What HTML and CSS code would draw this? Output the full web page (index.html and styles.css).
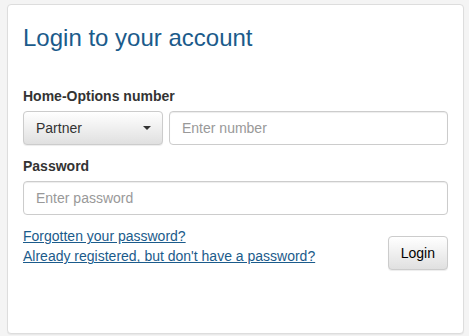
FILE: index.html
```html
<!DOCTYPE html>
<html lang="en">
<head>
    <meta charset="UTF-8">
    <meta name="viewport" content="width=device-width, initial-scale=1.0">
    <title>Login</title>
    <link rel="stylesheet" href="styles.css">
</head>
<body>
    <div class="login-panel">
        <h3 class="login-title">Login to your account</h3>

        <form class="login-form" onsubmit="return false;">
            <div class="form-group">
                <label for="number-input">Home-Options number</label>
                <div class="number-row">
                    <button type="button" class="btn btn-default select-btn">
                        <span>Partner</span>
                        <span class="caret"></span>
                    </button>
                    <input type="text" id="number-input" class="form-control" placeholder="Enter number">
                </div>
            </div>

            <div class="form-group">
                <label for="password-input">Password</label>
                <input type="password" id="password-input" class="form-control" placeholder="Enter password">
            </div>

            <div class="form-footer">
                <div class="links">
                    <a href="#">Forgotten your password?</a>
                    <a href="#">Already registered, but don't have a password?</a>
                </div>
                <button type="submit" class="btn btn-default login-btn">Login</button>
            </div>
        </form>
    </div>
</body>
</html>
```

FILE: styles.css
```css
html, body {
    height: 100%;
}
body {
    font-family: "Liberation Sans", Arial, sans-serif;
    font-size: 14px;
    line-height: 20px;
    color: #333;
    background-color: #f4f4f4;
    margin: 0;
    padding: 4px 5px 2px 7px;
    box-sizing: border-box;
}
.login-panel {
    height: 100%;
    box-sizing: border-box;
    background-color: #fff;
    border: 1px solid #ddd;
    border-radius: 4px;
    box-shadow: 0 1px 1px rgba(0,0,0,0.05);
    padding: 15px;
}
.login-title {
    font-size: 24px;
    font-weight: normal;
    line-height: 1.1;
    color: #1b5b8b;
    margin: 5px 0 0 0;
}
.login-form {
    margin-top: 35px;
}
.form-group {
    margin-bottom: 11px;
}
.form-group label {
    display: block;
    font-weight: bold;
    margin-bottom: 5px;
}
.number-row {
    display: flex;
    gap: 6px;
}
.form-control {
    display: block;
    width: 100%;
    height: 34px;
    box-sizing: border-box;
    padding: 6px 12px;
    font-family: inherit;
    font-size: 14px;
    color: #555;
    background-color: #fff;
    border: 1px solid #ccc;
    border-radius: 4px;
    box-shadow: inset 0 1px 1px rgba(0,0,0,0.075);
}
.form-control::placeholder {
    color: #999;
}
.btn {
    height: 34px;
    box-sizing: border-box;
    padding: 6px 12px;
    font-family: inherit;
    font-size: 14px;
    line-height: 20px;
    border-radius: 4px;
    cursor: pointer;
}
.btn-default {
    color: #333;
    background-image: linear-gradient(to bottom, #fff 0, #e0e0e0 100%);
    border: 1px solid #ccc;
    box-shadow: inset 0 1px 0 rgba(255,255,255,0.15), 0 1px 1px rgba(0,0,0,0.075);
}
.select-btn {
    flex: 0 0 140px;
    display: flex;
    align-items: center;
    justify-content: space-between;
    text-align: left;
}
.caret {
    width: 0;
    height: 0;
    border-top: 4px solid #333;
    border-left: 4px solid transparent;
    border-right: 4px solid transparent;
    margin-right: -1px;
}
.form-footer {
    display: flex;
    justify-content: space-between;
    align-items: flex-start;
}
.links a {
    display: block;
    color: #1b5b8b;
    text-decoration: underline;
}
.login-btn {
    margin-top: 10px;
    color: #000;
}
```
